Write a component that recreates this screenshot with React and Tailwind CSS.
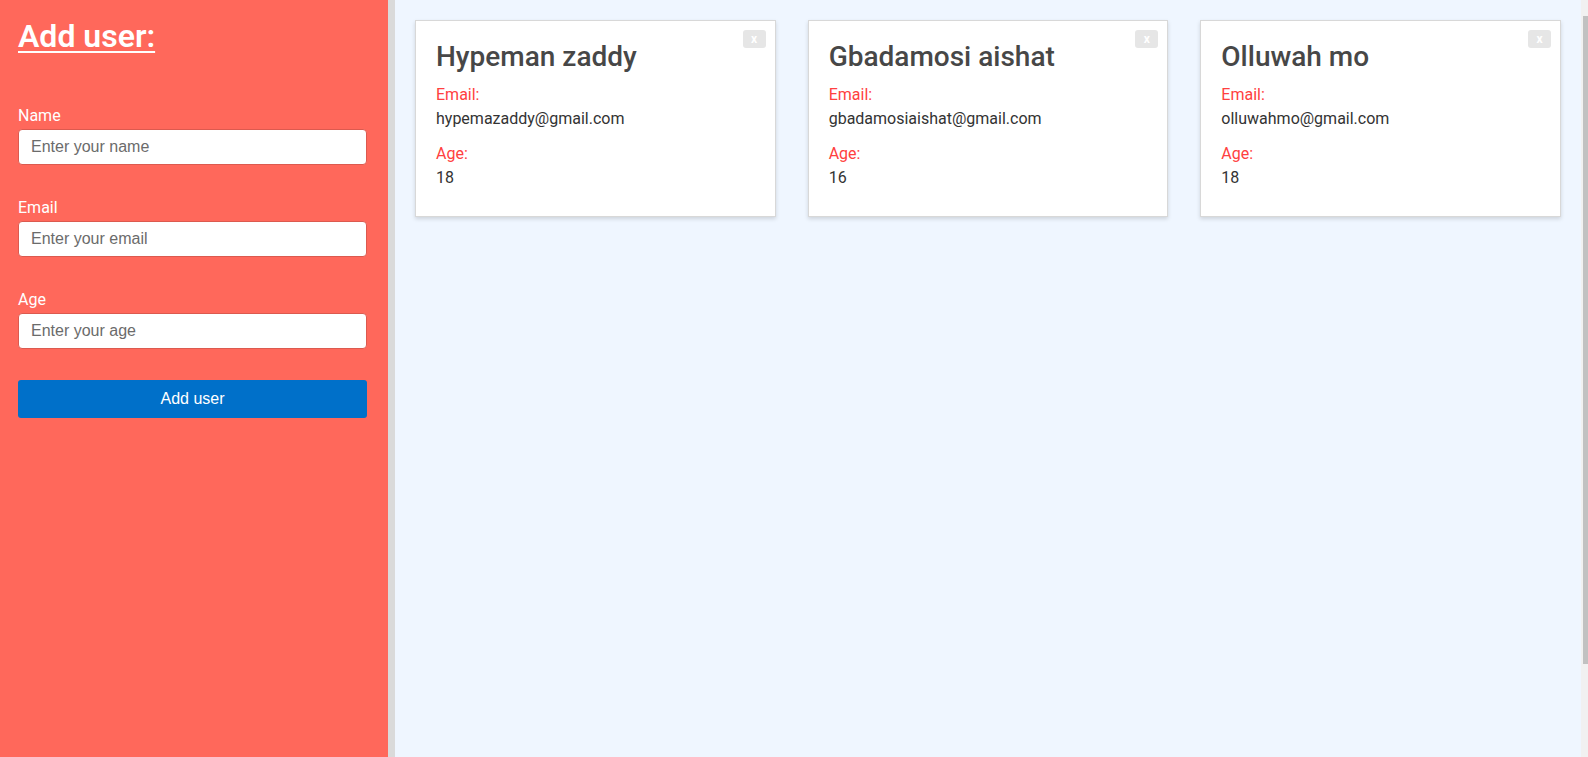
import { useState } from "react";

const initialUsers = [
    { id: 1, name: "Hypeman zaddy", email: "hypemazaddy@gmail.com", age: 18 },
    { id: 2, name: "Gbadamosi aishat", email: "gbadamosiaishat@gmail.com", age: 16 },
    { id: 3, name: "Olluwah mo", email: "olluwahmo@gmail.com", age: 18 },
];

function Field({ label, placeholder, value, onChange, type = "text" }) {
    return (
        <div className="mb-[33px]">
            <label className="block text-[16px] leading-[19px] text-white">{label}</label>
            <input
                type={type}
                value={value}
                onChange={(e) => onChange(e.target.value)}
                placeholder={placeholder}
                className="mt-[4px] block h-[36px] w-full rounded-[4px] border border-[#dc5a4f] bg-white px-[12px] font-['Liberation_Sans',Arial,sans-serif] text-[16px] text-[#333] outline-none placeholder:text-[#6b6b6b]"
            />
        </div>
    );
}

function UserCard({ user, onRemove }) {
    return (
        <div className="relative border border-[#d8d8d8] bg-white px-5 pt-[19px] pb-[26px] shadow-[0_2px_4px_rgba(0,0,0,0.14)]">
            <button
                onClick={() => onRemove(user.id)}
                className="absolute top-[9px] right-[9px] flex h-[18px] w-[23px] items-center justify-center rounded-[3px] bg-[#e6e6e6] text-[12px] font-bold leading-none text-white"
            >
                x
            </button>
            <h2 className="text-[28px] font-medium leading-[34px] text-[#474747]">{user.name}</h2>
            <div className="mt-[9px] text-[16px] leading-[24px] text-[#ff4040]">Email:</div>
            <div className="text-[16px] leading-[24px] text-[#333]">{user.email}</div>
            <div className="mt-[11px] text-[16px] leading-[24px] text-[#ff4040]">Age:</div>
            <div className="text-[16px] leading-[24px] text-[#333]">{user.age}</div>
        </div>
    );
}

export default function App() {
    const [users, setUsers] = useState(initialUsers);
    const [name, setName] = useState("");
    const [email, setEmail] = useState("");
    const [age, setAge] = useState("");

    const addUser = (e) => {
        e.preventDefault();
        if (!name || !email || !age) return;
        setUsers(prev => [...prev, { id: Date.now(), name, email, age }]);
        setName("");
        setEmail("");
        setAge("");
    };

    return (
        <div className="flex h-[757px] w-full overflow-hidden font-['Roboto',sans-serif]">
            <aside className="w-[388px] shrink-0 bg-[#ff685b] px-[18px] pt-[17px]">
                <h1 className="text-[32px] font-semibold leading-[38px] text-white underline decoration-2 underline-offset-[4px]">
                    Add user:
                </h1>
                <form onSubmit={addUser} className="mt-[51px] w-[349px]">
                    <Field label="Name" placeholder="Enter your name" value={name} onChange={setName} />
                    <Field label="Email" placeholder="Enter your email" value={email} onChange={setEmail} type="email" />
                    <Field label="Age" placeholder="Enter your age" value={age} onChange={setAge} />
                    <button
                        type="submit"
                        className="-mt-[2px] h-[38px] w-full rounded-[3px] bg-[#0070c9] font-['Liberation_Sans',Arial,sans-serif] text-[16px] text-white"
                    >
                        Add user
                    </button>
                </form>
            </aside>
            <div className="w-[7px] shrink-0 bg-[#dadada]" />
            <main className="grid flex-1 grid-cols-3 content-start gap-8 bg-[#eff6ff] p-5">
                {users.map(u => (
                    <UserCard key={u.id} user={u} onRemove={(id) => setUsers(prev => prev.filter(x => x.id !== id))} />
                ))}
            </main>
            <div className="flex w-[7px] shrink-0 flex-col bg-[#f1f1f1] pl-[2px]">
                <div className="h-[16px]" />
                <div className="h-[648px] bg-[#c1c1c1]" />
            </div>
        </div>
    );
}
